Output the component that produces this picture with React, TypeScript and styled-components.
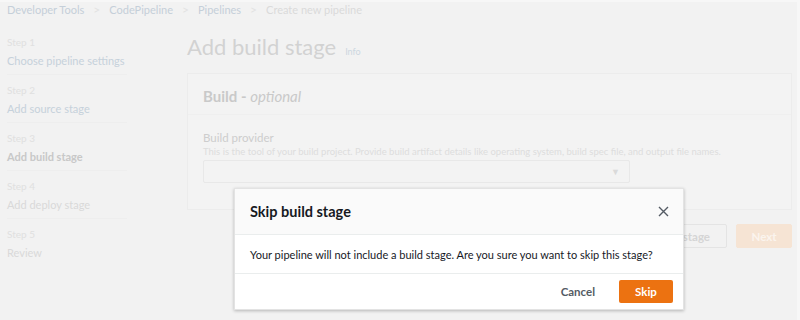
import React from "react";
import styled, { createGlobalStyle } from "styled-components";

const GlobalStyle = createGlobalStyle`
  * { box-sizing: border-box; }
  body {
    margin: 0;
    background: #f7f7f7;
    font-family: Lato, "Liberation Sans", sans-serif;
  }
`;

const Screen = styled.div`
  position: relative;
  width: 797px;
  height: 318px;
  margin-top: 2px;
  background: #f2f2f2;
  overflow: hidden;
`;

const Page = styled.div`
  padding: 0 5px 0 7px;
`;

const Crumbs = styled.nav`
  display: flex;
  align-items: center;
  gap: 9px;
  height: 14px;
  font-size: 11px;
  color: #c5cfd9;
  white-space: nowrap;
`;

const CrumbSep = styled.span`
  color: #e2e2e2;
  font-size: 12px;
`;

const CrumbCurrent = styled.span`
  color: #dadada;
`;

const Layout = styled.div`
  display: grid;
  grid-template-columns: 120px 1fr;
  column-gap: 60px;
  margin-top: 11px;
`;

const Steps = styled.ol`
  list-style: none;
  margin: 0;
  padding: 0;
`;

const StepItem = styled.li`
  padding: 7px 0 3px;
  border-bottom: 1px solid #eeeeee;
  &:last-child { border-bottom: none; }
`;

const StepLabel = styled.div`
  font-size: 10px;
  line-height: 16px;
  color: #e0e0e0;
`;

const StepName = styled.div<{ $state: "link" | "current" | "next" }>`
  margin-top: 1px;
  font-size: 11px;
  line-height: 20px;
  white-space: nowrap;
  font-weight: ${(p) => (p.$state === "current" ? 700 : 400)};
  color: ${(p) =>
    p.$state === "link" ? "#c6d1db" : p.$state === "current" ? "#c8c8c8" : "#d9d9d9"};
`;

const Main = styled.main`
  padding-top: 5px;
`;

const TitleRow = styled.div`
  display: flex;
  align-items: baseline;
  gap: 9px;
  height: 30px;
`;

const Title = styled.h1`
  margin: 0;
  font-size: 22px;
  line-height: 30px;
  font-weight: 400;
  color: #d2d2d2;
`;

const InfoLink = styled.span`
  font-size: 9px;
  color: #cdd7e0;
`;

const Panel = styled.section`
  margin-top: 11px;
  height: 137px;
  background: #f3f3f3;
  border: 1px solid #ececec;
`;

const PanelHeader = styled.div`
  padding: 13px 15px 8px;
  border-bottom: 1px solid #efefef;
  font-size: 15px;
  font-weight: 700;
  line-height: 19px;
  color: #c9c9c9;
  em {
    font-weight: 400;
    font-style: italic;
  }
`;

const Field = styled.div`
  padding: 15px 15px 0;
`;

const FieldLabel = styled.div`
  font-size: 11.5px;
  line-height: 15px;
  color: #cdcdcd;
`;

const FieldHint = styled.div`
  font-size: 9.5px;
  line-height: 13px;
  color: #dddddd;
  white-space: nowrap;
`;

const SelectBox = styled.div`
  display: flex;
  align-items: center;
  justify-content: flex-end;
  width: 427px;
  height: 23px;
  margin-top: 2px;
  padding-right: 9px;
  border: 1px solid #e8e8e8;
  border-radius: 2px;
  color: #dadada;
  font-size: 9px;
`;

const Actions = styled.div`
  display: flex;
  justify-content: flex-end;
  gap: 9px;
  margin-top: 14px;
`;

const GhostButton = styled.div<{ $primary?: boolean }>`
  display: flex;
  align-items: center;
  justify-content: center;
  height: 24px;
  padding: 0 16px;
  border-radius: 2px;
  font-size: 11.5px;
  font-weight: 700;
  border: 1px solid ${(p) => (p.$primary ? "#f6e4d4" : "#e4e4e4")};
  background: ${(p) => (p.$primary ? "#f6e4d4" : "transparent")};
  color: ${(p) => (p.$primary ? "#fbf4ee" : "#d5d5d5")};
  width: ${(p) => (p.$primary ? "56px" : "auto")};
`;

const Dialog = styled.div`
  position: absolute;
  left: 234px;
  top: 186px;
  width: 450px;
  background: #ffffff;
  border: 1px solid #e3e3e3;
  box-shadow: 0 1px 3px rgba(0, 0, 0, 0.25);
`;

const DialogHeader = styled.div`
  display: flex;
  align-items: center;
  justify-content: space-between;
  height: 46px;
  padding: 0 12px 0 15px;
  background: #fafafa;
  border-bottom: 1px solid #eaeded;
`;

const DialogTitle = styled.h2`
  margin: 0;
  font-size: 14.5px;
  font-weight: 700;
  color: #16191f;
`;

const CloseButton = styled.button`
  display: flex;
  align-items: center;
  justify-content: center;
  width: 16px;
  height: 16px;
  padding: 0;
  border: none;
  background: none;
  color: #545b64;
`;

const DialogBody = styled.div`
  height: 39px;
  display: flex;
  align-items: center;
  padding: 0 15px;
  font-size: 11px;
  color: #16191f;
  border-bottom: 1px solid #eaeded;
`;

const DialogFooter = styled.div`
  display: flex;
  align-items: center;
  justify-content: flex-end;
  gap: 24px;
  height: 35px;
  padding: 0 10px 0 15px;
`;

const TextButton = styled.button`
  border: none;
  background: none;
  padding: 0;
  font-family: inherit;
  font-size: 11.5px;
  font-weight: 700;
  color: #545b64;
`;

const PrimaryButton = styled.button`
  width: 54px;
  height: 23px;
  border: none;
  border-radius: 2px;
  background: #ec7211;
  font-family: inherit;
  font-size: 11.5px;
  font-weight: 700;
  color: #ffffff;
`;

const steps = [
  { label: "Step 1", name: "Choose pipeline settings", state: "link" as const },
  { label: "Step 2", name: "Add source stage", state: "link" as const },
  { label: "Step 3", name: "Add build stage", state: "current" as const },
  { label: "Step 4", name: "Add deploy stage", state: "next" as const },
  { label: "Step 5", name: "Review", state: "next" as const },
];

const crumbs = ["Developer Tools", "CodePipeline", "Pipelines"];

export default function App() {
  return (
    <>
      <GlobalStyle />
      <Screen>
        <Page>
          <Crumbs>
            {crumbs.map((c) => (
              <React.Fragment key={c}>
                <span>{c}</span>
                <CrumbSep>&gt;</CrumbSep>
              </React.Fragment>
            ))}
            <CrumbCurrent>Create new pipeline</CrumbCurrent>
          </Crumbs>
          <Layout>
            <Steps>
              {steps.map((s) => (
                <StepItem key={s.label}>
                  <StepLabel>{s.label}</StepLabel>
                  <StepName $state={s.state}>{s.name}</StepName>
                </StepItem>
              ))}
            </Steps>
            <Main>
              <TitleRow>
                <Title>Add build stage</Title>
                <InfoLink>Info</InfoLink>
              </TitleRow>
              <Panel>
                <PanelHeader>
                  Build - <em>optional</em>
                </PanelHeader>
                <Field>
                  <FieldLabel>Build provider</FieldLabel>
                  <FieldHint>
                    This is the tool of your build project. Provide build artifact details like
                    operating system, build spec file, and output file names.
                  </FieldHint>
                  <SelectBox>▼</SelectBox>
                </Field>
              </Panel>
              <Actions>
                <GhostButton>Skip build stage</GhostButton>
                <GhostButton $primary>Next</GhostButton>
              </Actions>
            </Main>
          </Layout>
        </Page>

        <Dialog role="dialog">
          <DialogHeader>
            <DialogTitle>Skip build stage</DialogTitle>
            <CloseButton aria-label="Close">
              <svg width="11" height="11" viewBox="0 0 11 11">
                <path d="M1 1L10 10M10 1L1 10" stroke="currentColor" strokeWidth="1.4" />
              </svg>
            </CloseButton>
          </DialogHeader>
          <DialogBody>
            Your pipeline will not include a build stage. Are you sure you want to skip this stage?
          </DialogBody>
          <DialogFooter>
            <TextButton>Cancel</TextButton>
            <PrimaryButton>Skip</PrimaryButton>
          </DialogFooter>
        </Dialog>
      </Screen>
    </>
  );
}
